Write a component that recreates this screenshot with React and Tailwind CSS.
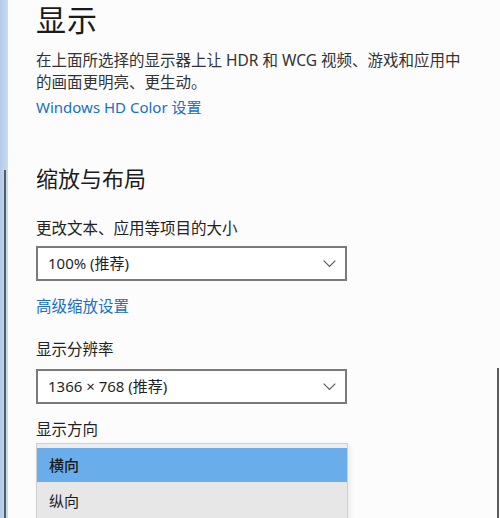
import React from "react";

const Chevron = () => (
    <svg width="13" height="8" viewBox="0 0 13 8" fill="none" className="shrink-0">
        <path d="M0.7 0.7 L6.5 6.5 L12.3 0.7" stroke="#5a5a5a" strokeWidth="1.2" />
    </svg>
);

const Select = ({ value }) => (
    <div className="w-[311px] h-[35px] border-2 border-[#7a7a7a] bg-white flex items-center justify-between pl-[10px] pr-[9px]">
        <span className="text-[15px] text-[#1f1f1f]">{value}</span>
        <Chevron />
    </div>
);

const DisplaySettings = () => {
    return (
        <div className="w-[500px] h-[518px] overflow-hidden bg-[#fcfcfd] flex font-['Segoe_UI','Noto_Sans','Noto_Sans_CJK_SC',sans-serif]">
            {/* left edge strip */}
            <div className="w-[8px] shrink-0 bg-gradient-to-r from-[#b3cbe8] to-[#c9dcf1] pt-[170px]">
                <div className="ml-[4px] w-[2px] h-full bg-[#5b5b5b]" />
            </div>

            {/* content */}
            <div className="flex-1 pl-[28px] flex flex-col items-start">
                <h1 className="text-[30px] leading-[40px] text-[#1a1a1a] tracking-[1px]">显示</h1>
                <p className="mt-[9px] text-[15.5px] leading-[22px] text-[#333] whitespace-nowrap">
                    在上面所选择的显示器上让 HDR 和 WCG 视频、游戏和应用中
                    <br />
                    的画面更明亮、更生动。
                </p>
                <a className="mt-[4px] text-[15px] leading-[21px] text-[#1a6fbf]">Windows HD Color 设置</a>

                <h2 className="mt-[45px] text-[22px] leading-[30px] text-[#1a1a1a]">缩放与布局</h2>
                <div className="mt-[25px] text-[15.5px] leading-[21px] text-[#222]">更改文本、应用等项目的大小</div>
                <div className="mt-[7px]">
                    <Select value="100% (推荐)" />
                </div>
                <a className="mt-[15px] text-[15.5px] leading-[21px] text-[#1a6fbf]">高级缩放设置</a>

                <div className="mt-[22px] text-[15.5px] leading-[21px] text-[#222]">显示分辨率</div>
                <div className="mt-[9px]">
                    <Select value="1366 × 768 (推荐)" />
                </div>

                <div className="mt-[15px] text-[15.5px] leading-[21px] text-[#222]">显示方向</div>
                <div className="mt-[3px] w-[312px] border border-[#cfcfcf] bg-[#ececec] pt-[4px] shadow-[2px_2px_6px_rgba(0,0,0,0.08)]">
                    <div className="h-[34px] bg-[#69aeeb] flex items-center pl-[12px] text-[15px] font-medium text-[#1a1a1a]">横向</div>
                    <div className="h-[40px] bg-[#e7e7e7] flex items-start pt-[8px] pl-[12px] text-[15px] text-[#1a1a1a]">纵向</div>
                </div>
            </div>

            {/* right scrollbar line */}
            <div className="w-[3px] shrink-0 pt-[368px]">
                <div className="w-[2px] h-full bg-[#5b5b5b]" />
            </div>
        </div>
    );
};

export default function App() {
    return <DisplaySettings />;
}
